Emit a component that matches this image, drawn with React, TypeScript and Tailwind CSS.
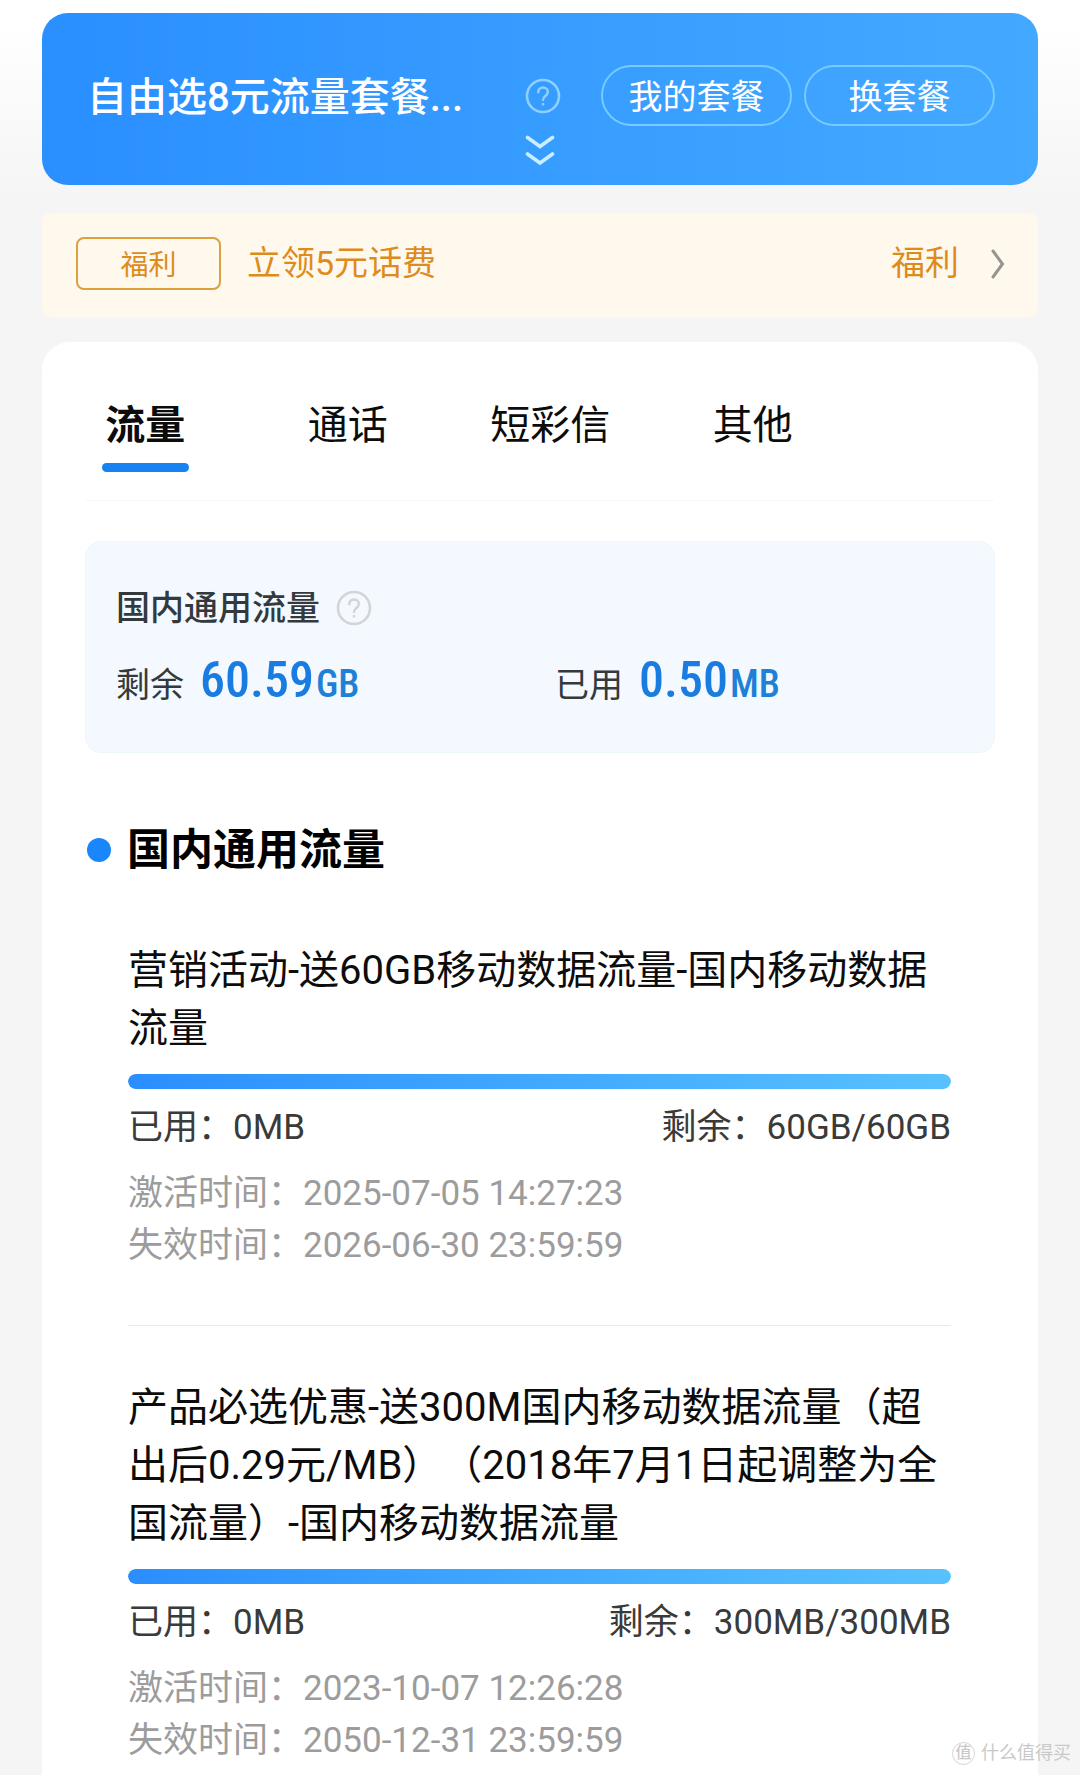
import { useState } from "react";

const tabs = ["流量", "通话", "短彩信", "其他"];

const packages = [
  {
    name: "营销活动-送60GB移动数据流量-国内移动数据流量",
    used: "0MB",
    left: "60GB/60GB",
    percent: 100,
    start: "2025-07-05 14:27:23",
    end: "2026-06-30 23:59:59",
  },
  {
    name: "产品必选优惠-送300M国内移动数据流量（超出后0.29元/MB）（2018年7月1日起调整为全国流量）-国内移动数据流量",
    used: "0MB",
    left: "300MB/300MB",
    percent: 100,
    start: "2023-10-07 12:26:28",
    end: "2050-12-31 23:59:59",
  },
];

function HelpIcon() {
  return (
    <svg viewBox="0 0 36 36" className="size-9" fill="none" stroke="currentColor" strokeLinecap="round" aria-hidden="true">
      <circle cx="18" cy="18" r="16" strokeWidth="2.6" />
      <path d="M13.2 14.2c0-3 2.2-4.7 4.8-4.7s4.8 1.8 4.8 4.400c0 4-4.800 4.200-4.800 8" strokeWidth="2.4" />
      <circle cx="18" cy="26.3" r="0.8" fill="currentColor" strokeWidth="1.2" />
    </svg>
  );
}

function PlanHeader() {
  return (
    <header className="rounded-[26px] bg-gradient-to-r from-[#2a8fff] to-[#43a9ff] px-[43px] pt-[52px] pb-[18px] text-white">
      <div className="flex h-[61px] items-center">
        <h1 className="min-w-0 flex-1 truncate pt-1 pl-0.5 text-[40px] leading-[60px] font-medium">自由选8元流量套餐...</h1>
        <button type="button" aria-label="套餐说明" className="mr-10 shrink-0 text-[#8fd0ff]">
          <HelpIcon />
        </button>
        <div className="flex shrink-0 gap-3 text-[34px]">
          <button type="button" className="h-[61px] w-[191px] rounded-full border-2 border-[#76cbff] pt-1">
            我的套餐
          </button>
          <button type="button" className="h-[61px] w-[191px] rounded-full border-2 border-[#76cbff] pt-1">
            换套餐
          </button>
        </div>
      </div>
      <div className="mt-2 flex justify-center">
        <button type="button" aria-label="展开" className="text-[#c9efff]">
          <svg viewBox="0 0 30 33" className="h-[33px] w-[30px]" fill="none" stroke="currentColor" strokeWidth="3.6" strokeLinecap="round" aria-hidden="true">
            <path d="M2.5 3.5 15 12.5 27.5 3.5" />
            <path d="M2.5 20 15 29 27.5 20" />
          </svg>
        </button>
      </div>
    </header>
  );
}

function Benefit() {
  return (
    <a href="#benefit" className="mt-7 flex h-[104px] items-center rounded-lg bg-[#fff8ed] pr-[33px] pb-[3px] pl-[34px] text-[34px] text-[#dd8c1c]">
      <span className="flex h-[53px] w-[145px] items-center justify-center rounded-lg border-2 border-[#dba040] pt-1 text-[28px]">福利</span>
      <span className="ml-[26px] flex-1">立领5元话费</span>
      <span>福利</span>
      <svg viewBox="0 0 14 32" className="ml-8 h-8 w-[14px] text-[#999390]" fill="none" stroke="currentColor" strokeWidth="3" strokeLinecap="round" aria-hidden="true">
        <path d="M2 3 11.5 16 2 29" />
      </svg>
    </a>
  );
}

function Amount({ label, value, unit }: { label: string; value: string; unit: string }) {
  return (
    <div className="flex items-baseline font-['Roboto_Condensed',Roboto,'Noto_Sans_CJK_SC',sans-serif] leading-[60px]">
      <span className="text-[34px] text-[#33393d]">{label}</span>
      <span className="ml-4 text-[50px] font-medium text-[#1a7ce0]">{value}</span>
      <span className="ml-0.5 text-[38px] font-medium text-[#1f80d8]">{unit}</span>
    </div>
  );
}

function PackageItem({ item }: { item: (typeof packages)[number] }) {
  return (
    <li className="border-b border-[#e9e9e9] py-[53px] first:pt-0 last:border-b-0 last:pb-2">
      <h3 className="text-[40px] leading-[58px] text-[#0c0c0c] [text-spacing-trim:space-all]">{item.name}</h3>
      <div className="mt-4 h-[15px] overflow-hidden rounded-full bg-[#eeeeee]">
        <div className="h-full rounded-full bg-gradient-to-r from-[#2b8eff] to-[#58c2ff]" style={{ width: `${item.percent}%` }} />
      </div>
      <div className="mt-[13px] flex justify-between text-[35px] leading-[52px] text-[#3a3a3a] [text-spacing-trim:space-all]">
        <span>已用：{item.used}</span>
        <span>剩余：{item.left}</span>
      </div>
      <dl className="mt-[14px] text-[35px] leading-[52px] text-[#9c9c9c] [text-spacing-trim:space-all]">
        <div className="flex">
          <dt>激活时间：</dt>
          <dd>{item.start}</dd>
        </div>
        <div className="flex">
          <dt>失效时间：</dt>
          <dd>{item.end}</dd>
        </div>
      </dl>
    </li>
  );
}

export default function App() {
  const [active, setActive] = useState(0);
  return (
    <div className="relative flex min-h-screen flex-col bg-[#f5f5f5] bg-[linear-gradient(#ffffff,#ffffff_20px,#f5f5f5_200px)] px-[42px] pt-[13px] font-[Roboto,'Noto_Sans_CJK_SC',sans-serif]">
      <PlanHeader />
      <Benefit />
      <main className="mt-[25px] flex-1 rounded-t-[28px] bg-white">
        <nav className="grid grid-cols-4 pt-[54px] pr-[184px] pl-0.5">
          {tabs.map((tab, i) => (
            <button
              key={tab}
              type="button"
              onClick={() => setActive(i)}
              className={"flex flex-col items-center text-[40px] leading-[60px] text-[#0c0c0c] " + (i === active ? "font-bold" : "font-normal")}
            >
              {tab}
              <span className={"mt-[7px] h-[9px] w-[87px] rounded-full " + (i === active ? "bg-[#1783f2]" : "bg-transparent")} />
            </button>
          ))}
        </nav>
        <div className="mx-[43px] mt-7 border-t border-[#f8f8f8]" />

        <section className="mx-[43px] mt-10 rounded-2xl border border-[#edf6f9] bg-[#f3f9fe] pt-10 pb-[37px] pl-[30px]">
          <h2 className="flex items-center text-[34px] leading-[52px] font-medium text-[#33393d]">
            国内通用流量
            <button type="button" aria-label="流量说明" className="ml-4 text-[#d2d5d8]">
              <HelpIcon />
            </button>
          </h2>
          <div className="mt-4 grid grid-cols-2">
            <Amount label="剩余" value="60.59" unit="GB" />
            <Amount label="已用" value="0.50" unit="MB" />
          </div>
        </section>

        <section className="pt-[66px] pr-[87px] pl-[45px]">
          <h2 className="flex items-center gap-4 text-[43px] leading-[62px] font-bold text-black">
            <span className="size-6 rounded-full bg-[#1a86fb]" />
            国内通用流量
          </h2>
          <ul className="mt-[61px] ml-[41px]">
            {packages.map((item) => (
              <PackageItem key={item.name} item={item} />
            ))}
          </ul>
        </section>
      </main>

      <div className="absolute right-[9px] bottom-2 flex items-center gap-1.5 text-[18px] leading-7 text-[#c9c9c9]">
        <span className="flex size-[23px] items-center justify-center rounded-full border border-[#d5d5d5] text-[16px] font-medium">值</span>
        什么值得买
      </div>
    </div>
  );
}
